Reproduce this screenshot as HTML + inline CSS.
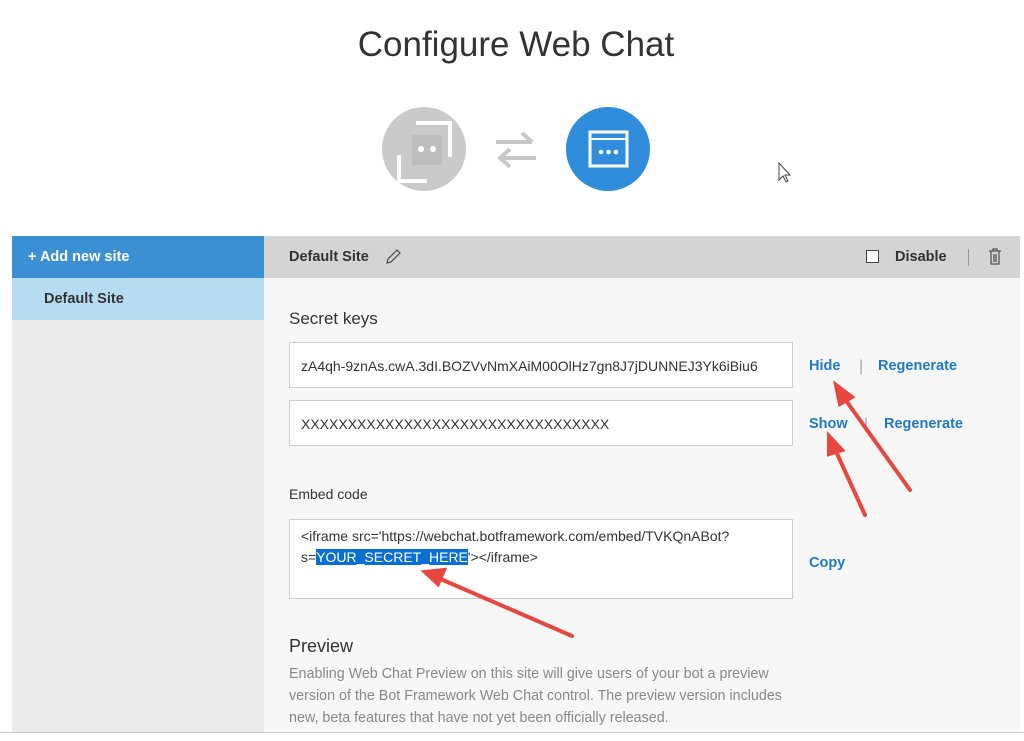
<!DOCTYPE html>
<html><head><meta charset="utf-8"><style>
*{margin:0;padding:0;box-sizing:border-box}
body{width:1024px;height:741px;background:#fff;font-family:"Liberation Sans",sans-serif;position:relative;overflow:hidden;color:#222}
.a{position:absolute}
h1{position:absolute;left:0;width:1032px;top:25px;text-align:center;font-weight:normal;font-size:35px;color:#333}
.inp{position:absolute;left:289px;width:504px;background:#fff;border:1px solid #ccc;font-size:14px;color:#333;white-space:nowrap;overflow:hidden;padding-left:11px}
.lnk{position:absolute;color:#1f7ac4;font-size:14.5px;font-weight:bold}
</style></head><body>
<h1>Configure Web Chat</h1>
<div class="a" style="left:382px;top:107px;width:84px;height:84px;border-radius:50%;background:#cacaca"></div>
<svg class="a" style="left:382px;top:107px" width="84" height="84"><path d="M17 48V74H45" stroke="#fff" stroke-width="4" fill="none"/><path d="M34 16H68V50" stroke="#fff" stroke-width="4" fill="none"/><rect x="30" y="28" width="30" height="30" fill="#bdbdbd"/><circle cx="39" cy="42" r="3" fill="#fff"/><circle cx="51" cy="42" r="3" fill="#fff"/></svg>
<svg class="a" style="left:494px;top:130px" width="44" height="40"><path d="M2 12H38M28 3L38 12" stroke="#c8c8c8" stroke-width="4" fill="none"/><path d="M42 28H6M16 19L6 28L16 37" stroke="#c8c8c8" stroke-width="4" fill="none"/></svg>
<div class="a" style="left:566px;top:107px;width:84px;height:84px;border-radius:50%;background:#2f8ddc"></div>
<svg class="a" style="left:566px;top:107px" width="84" height="84"><rect x="24" y="25" width="37" height="34" stroke="#fff" stroke-width="3" fill="none"/><line x1="24" y1="32" x2="61" y2="32" stroke="#fff" stroke-width="2"/><circle cx="35" cy="45" r="2.3" fill="#fff"/><circle cx="42.5" cy="45" r="2.3" fill="#fff"/><circle cx="50" cy="45" r="2.3" fill="#fff"/></svg>
<svg class="a" style="left:777px;top:162px" width="16" height="22"><path d="M2 1V18L6 14L9 20L11 19L8 13H13Z" fill="#fff" stroke="#444"/></svg>

<div class="a" style="left:12px;top:236px;width:252px;height:42px;background:#3b8fd3;color:#fff;font-size:14.5px;font-weight:bold;padding:13px 0 0 16px">+ Add new site</div>
<div class="a" style="left:12px;top:278px;width:252px;height:42px;background:#b5dcf1;font-size:14.5px;font-weight:bold;padding:13px 0 0 32px;color:#333">Default Site</div>
<div class="a" style="left:12px;top:320px;width:252px;height:413px;background:#ebebeb"></div>
<div class="a" style="left:264px;top:236px;width:756px;height:42px;background:#d4d4d4"></div>
<div class="a" style="left:264px;top:278px;width:756px;height:455px;background:#f7f7f7"></div>
<div class="a" style="left:0;top:732px;width:1024px;height:1px;background:#ccc"></div>
<div class="a" style="left:289px;top:249px;font-size:14.5px;font-weight:bold;color:#333">Default Site</div>
<svg class="a" style="left:384px;top:248px" width="18" height="18"><path d="M3 15L4 11L13 2L16 5L7 14Z" stroke="#555" fill="none" stroke-width="1.3"/></svg>
<div class="a" style="left:866px;top:250px;width:13px;height:13px;border:1px solid #444;background:#fff"></div>
<div class="a" style="left:895px;top:249px;font-size:14.5px;font-weight:bold;color:#333">Disable</div>
<div class="a" style="left:968px;top:249px;width:1px;height:17px;background:#999"></div>
<svg class="a" style="left:988px;top:248px" width="14" height="18"><path d="M1 3H13M5 3V1H9V3M3 3V16H11V3M6 6V14M8 6V14" stroke="#555" fill="none" stroke-width="1.3"/></svg>

<div class="a" style="left:289px;top:309px;font-size:17px;color:#333">Secret keys</div>
<div class="inp" style="top:342px;height:46px;padding-top:15px">zA4qh-9znAs.cwA.3dI.BOZVvNmXAiM00OlHz7gn8J7jDUNNEJ3Yk6iBiu6</div>
<div class="lnk" style="left:809px;top:358px">Hide</div><div class="a" style="left:859px;top:358px;color:#aaa">|</div><div class="lnk" style="left:878px;top:358px">Regenerate</div>
<div class="inp" style="top:400px;height:46px;padding-top:15px">XXXXXXXXXXXXXXXXXXXXXXXXXXXXXXXXX</div>
<div class="lnk" style="left:809px;top:416px">Show</div><div class="a" style="left:864px;top:416px;color:#aaa">|</div><div class="lnk" style="left:884px;top:416px">Regenerate</div>
<div class="a" style="left:289px;top:486px;font-size:14px;color:#333">Embed code</div>
<div class="inp" style="top:519px;height:80px;padding:6px 0 0 11px;white-space:normal;line-height:21px">&lt;iframe src='https://webchat.botframework.com/embed/TVKQnABot?<br>s=<span style="background:#0a6fd3;color:#fff">YOUR_SECRET_HERE</span>'&gt;&lt;/iframe&gt;</div>
<div class="lnk" style="left:809px;top:555px">Copy</div>
<div class="a" style="left:289px;top:636px;font-size:18px;color:#333">Preview</div>
<div class="a" style="left:289px;top:663px;width:600px;font-size:14.3px;color:#888;line-height:22px;white-space:nowrap">Enabling Web Chat Preview on this site will give users of your bot a preview<br>version of the Bot Framework Web Chat control. The preview version includes<br>new, beta features that have not yet been officially released.</div>

<svg class="a" style="left:0;top:0" width="1024" height="741">
<g stroke="#e8473f" stroke-width="4" fill="#e8473f" stroke-linecap="round">
<line x1="910" y1="490" x2="842" y2="395"/><path d="M836 385L852 397L840 404Z"/>
<line x1="865" y1="515" x2="834" y2="447"/><path d="M829 436L842 450L829 454Z"/>
<line x1="572" y1="636" x2="436" y2="577"/><path d="M425 572L444 570L438 584Z"/>
</g></svg>
</body></html>
